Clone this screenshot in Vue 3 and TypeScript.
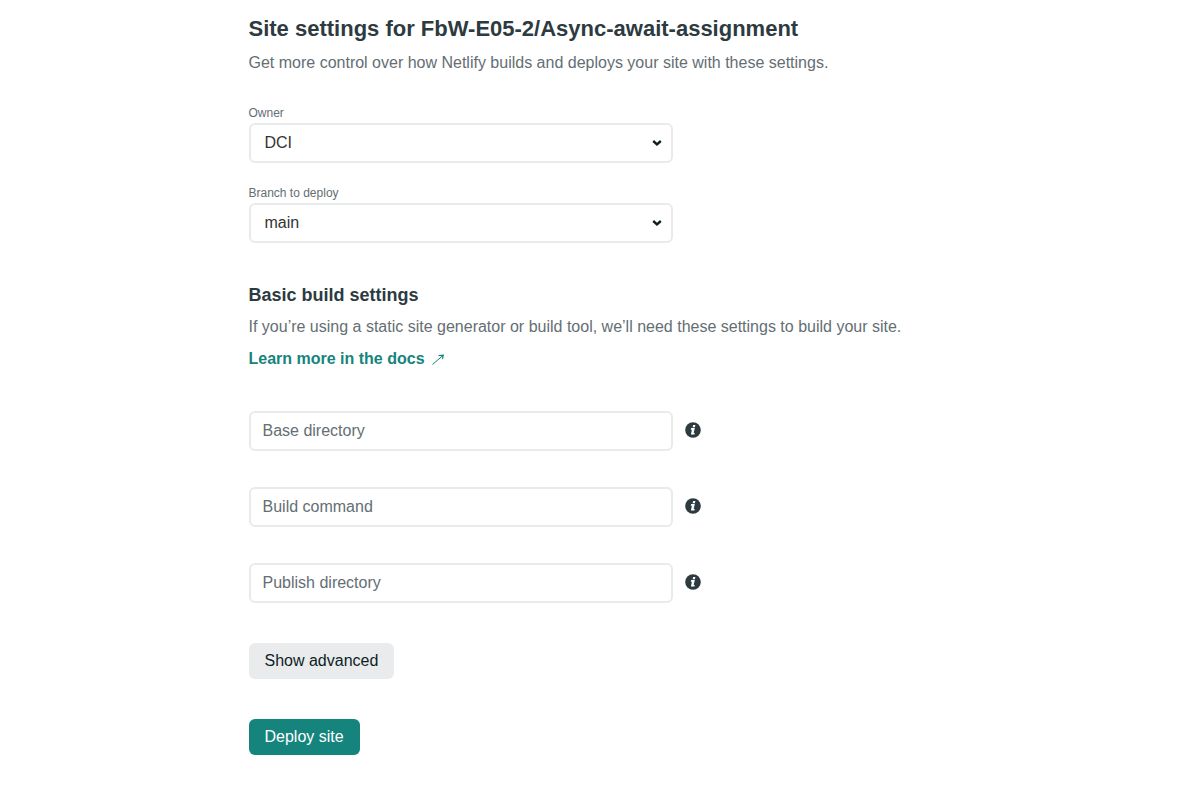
<script setup lang="ts">
import { ref } from 'vue'

interface BuildField {
  id: string
  label: string
}

const repository = 'FbW-E05-2/Async-await-assignment'
const owner = ref('DCI')
const branch = ref('main')

const buildFields: BuildField[] = [
  { id: 'base-directory', label: 'Base directory' },
  { id: 'build-command', label: 'Build command' },
  { id: 'publish-directory', label: 'Publish directory' },
]
const values = ref<Record<string, string>>({})
</script>

<template>
  <main class="page">
    <form class="settings" @submit.prevent>
      <header class="intro">
        <h1>Site settings for {{ repository }}</h1>
        <p>Get more control over how Netlify builds and deploys your site with these settings.</p>
      </header>

      <div class="selects">
        <div class="select-field">
          <label for="owner">Owner</label>
          <div class="select-wrap">
            <select id="owner" v-model="owner" class="control">
              <option>DCI</option>
            </select>
            <svg class="chevron" viewBox="0 0 10 6" aria-hidden="true"><path d="M1.2 1 5 4.3 8.8 1" /></svg>
          </div>
        </div>
        <div class="select-field">
          <label for="branch">Branch to deploy</label>
          <div class="select-wrap">
            <select id="branch" v-model="branch" class="control">
              <option>main</option>
            </select>
            <svg class="chevron" viewBox="0 0 10 6" aria-hidden="true"><path d="M1.2 1 5 4.3 8.8 1" /></svg>
          </div>
        </div>
      </div>

      <section class="build">
        <h2>Basic build settings</h2>
        <p>If you’re using a static site generator or build tool, we’ll need these settings to build your site.</p>
        <a href="#docs" class="docs">
          Learn more in the docs
          <svg class="arrow" viewBox="0 0 12 12" aria-hidden="true">
            <path class="arrow-line" d="M.5 10.5 11 1.5" />
            <path class="arrow-head" d="M6.5 1 12 .4 11 5.4 10.2 5 10.2 2.2 6.5 1.9Z" />
          </svg>
        </a>
      </section>

      <div class="inputs">
        <div v-for="field in buildFields" :key="field.id" class="input-row">
          <input
            :id="field.id"
            v-model="values[field.id]"
            class="control"
            type="text"
            :aria-label="field.label"
            :placeholder="field.label"
          />
          <button type="button" class="info" :aria-label="`About ${field.label}`">
            <svg viewBox="0 0 16 16" aria-hidden="true">
              <circle cx="8" cy="8" r="7.8" />
              <path d="M8.1 3h2.3L9.9 5.2H7.6ZM6.1 6.1h3.7L8.7 10.9h1.1L9.4 12.6H5.9L6.9 7.7H5.7Z" />
            </svg>
          </button>
        </div>
      </div>

      <div class="actions">
        <button type="button" class="button secondary">Show advanced</button>
        <button type="submit" class="button primary">Deploy site</button>
      </div>
    </form>
  </main>
</template>

<style>
body {
  background: #fff;
}
</style>

<style scoped>
.page {
  padding: 13px 24px 30px;
  color: #2d3b41;
  font-family: "Liberation Sans", Arial, sans-serif;
  font-size: 16px;
  line-height: 24px;
}

.settings {
  max-width: 682px;
  margin: 0 auto;
}

h1,
h2,
p {
  margin: 0;
}

h1 {
  font-size: 22px;
  line-height: 32px;
}

h2 {
  font-size: 18px;
  line-height: 24px;
}

p {
  color: #646e73;
}

.intro p {
  margin-top: 6px;
}

.selects {
  display: grid;
  gap: 20px;
  max-width: 424px;
  margin-top: 28px;
}

.select-field {
  display: grid;
}

label {
  color: #646e73;
  font-size: 12px;
  line-height: 20px;
}

.select-wrap {
  position: relative;
  display: flex;
}

.control {
  box-sizing: border-box;
  width: 100%;
  height: 40px;
  margin: 0;
  padding: 0 12px;
  border: 2px solid #e9ebeb;
  border-radius: 6px;
  background: #fff;
  color: #333;
  font: inherit;
}

select.control {
  padding: 0 32px 0 14px;
  appearance: none;
}

.control::placeholder {
  color: #646e73;
  opacity: 1;
}

.chevron {
  position: absolute;
  top: 17px;
  right: 11px;
  width: 10px;
  height: 6px;
  fill: none;
  stroke: #0e1e25;
  stroke-width: 2.4;
  pointer-events: none;
}

.build {
  display: grid;
  justify-items: start;
  gap: 8px;
  margin-top: 40px;
}

.docs {
  display: flex;
  align-items: center;
  gap: 7px;
  color: #15847d;
  font-weight: 700;
  text-decoration: none;
}

.arrow {
  width: 12px;
  height: 12px;
  margin-top: 2px;
}

.arrow-line {
  fill: none;
  stroke: #15847d;
}

.arrow-head {
  fill: #15847d;
}

.inputs {
  display: grid;
  gap: 36px;
  margin-top: 40px;
}

.input-row {
  display: flex;
  align-items: center;
  gap: 12px;
}

.input-row .control {
  max-width: 424px;
}

.info {
  display: flex;
  flex: none;
  width: 16px;
  height: 16px;
  margin: 0 0 2px;
  padding: 0;
  border: 0;
  background: none;
}

.info circle {
  fill: #2d3b41;
}

.info path {
  fill: #fff;
}

.actions {
  display: grid;
  justify-items: start;
  gap: 40px;
  margin-top: 40px;
}

.button {
  height: 36px;
  padding: 0 16px;
  border: 0;
  border-radius: 6px;
  font: inherit;
}

.secondary {
  background: #e9ebed;
  color: #0e1e25;
}

.primary {
  background: #15847d;
  color: #fff;
}
</style>
